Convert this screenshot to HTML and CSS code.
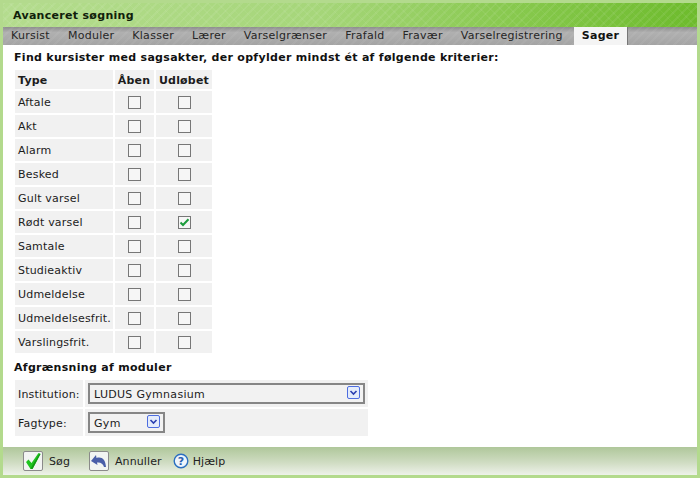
FILE: index.html
```html
<!DOCTYPE html>
<html lang="da">
<head>
    <meta charset="UTF-8">
    <title>Avanceret søgning</title>
    <link rel="stylesheet" href="styles.css">
</head>
<body>
    <div class="container">
        <div class="header">Avanceret søgning</div>
        <div class="tabs">
            <div class="tab">Kursist</div>
            <div class="tab">Moduler</div>
            <div class="tab">Klasser</div>
            <div class="tab">Lærer</div>
            <div class="tab">Varselgrænser</div>
            <div class="tab">Frafald</div>
            <div class="tab">Fravær</div>
            <div class="tab">Varselregistrering</div>
            <div class="tab active">Sager</div>
        </div>
        <div class="content">
            <div class="title">Find kursister med sagsakter, der opfylder mindst ét af følgende kriterier:</div>
            <table class="types">
                <tr class="head"><th class="name">Type</th><th>Åben</th><th>Udløbet</th></tr>
                <tr><td class="name">Aftale</td><td><span class="box"></span></td><td><span class="box"></span></td></tr>
                <tr><td class="name">Akt</td><td><span class="box"></span></td><td><span class="box"></span></td></tr>
                <tr><td class="name">Alarm</td><td><span class="box"></span></td><td><span class="box"></span></td></tr>
                <tr><td class="name">Besked</td><td><span class="box"></span></td><td><span class="box"></span></td></tr>
                <tr><td class="name">Gult varsel</td><td><span class="box"></span></td><td><span class="box"></span></td></tr>
                <tr><td class="name">Rødt varsel</td><td><span class="box"></span></td><td><span class="box">
                    <svg width="11" height="11" viewBox="0 0 11 11"><path d="M1.5 5.5 L4 8 L9.5 2.2" fill="none" stroke="#1c9c3c" stroke-width="2"/></svg>
                </span></td></tr>
                <tr><td class="name">Samtale</td><td><span class="box"></span></td><td><span class="box"></span></td></tr>
                <tr><td class="name">Studieaktiv</td><td><span class="box"></span></td><td><span class="box"></span></td></tr>
                <tr><td class="name">Udmeldelse</td><td><span class="box"></span></td><td><span class="box"></span></td></tr>
                <tr><td class="name">Udmeldelsesfrit.</td><td><span class="box"></span></td><td><span class="box"></span></td></tr>
                <tr><td class="name">Varslingsfrit.</td><td><span class="box"></span></td><td><span class="box"></span></td></tr>
            </table>
            <div class="subtitle">Afgrænsning af moduler</div>
            <table class="limits">
                <tr>
                    <td class="label">Institution:</td>
                    <td class="field"><div class="select wide"><span class="value">LUDUS Gymnasium</span>
                        <span class="arrow"><svg width="9" height="9" viewBox="0 0 9 9"><path d="M1.5 3 L4.5 6 L7.5 3" fill="none" stroke="#2a3fb0" stroke-width="1.6"/></svg></span>
                    </div></td>
                </tr>
                <tr>
                    <td class="label">Fagtype:</td>
                    <td class="field"><div class="select narrow"><span class="value">Gym</span>
                        <span class="arrow"><svg width="9" height="9" viewBox="0 0 9 9"><path d="M1.5 3 L4.5 6 L7.5 3" fill="none" stroke="#2a3fb0" stroke-width="1.6"/></svg></span>
                    </div></td>
                </tr>
            </table>
        </div>
        <div class="footer">
            <div class="action">
                <span class="icon-btn"><svg width="18" height="18" viewBox="0 0 18 18"><path d="M2 10 L4.5 7.5 L7.5 11 L14.5 1 L16.5 2 L8.5 17 L6.5 17 Z" fill="#1fc41f"/><path d="M6.5 17 L8.5 17 L16.5 2 L15.5 1.5 L8 14 Z" fill="#139a13"/></svg></span>
                Søg
            </div>
            <div class="action cancel">
                <span class="icon-btn"><svg width="18" height="18" viewBox="0 0 18 18"><path d="M1 9 L6 3 L6.5 6 C11.5 4.5 15.5 7 16 15 L14 15 C13 11.5 10.5 10 7 10.5 L7.5 13 Z" fill="#4a5ea8"/></svg></span>
                Annuller
            </div>
            <div class="action help">
                <svg width="16" height="16" viewBox="0 0 16 16"><circle cx="8" cy="8" r="6.8" fill="#eef4fb" stroke="#2b6fc0" stroke-width="1.4"/><text x="8" y="12" font-size="11" font-weight="bold" font-family="DejaVu Sans" text-anchor="middle" fill="#2b5fb0">?</text></svg>
                Hjælp
            </div>
        </div>
    </div>
</body>
</html>
```

FILE: styles.css
```css
html, body {
    margin: 0;
    height: 100%;
}
body {
    font-family: "DejaVu Sans", Verdana, sans-serif;
    font-size: 11px;
    letter-spacing: 0.2px;
    color: #1c1c1c;
    background-color: #b3da8d;
    overflow: hidden;
}
.container {
    height: 478px;
    box-sizing: border-box;
    padding: 3px;
    display: flex;
    flex-direction: column;
}

.header {
    height: 24px;
    box-sizing: border-box;
    padding: 6px 0 0 10px;
    font-weight: bold;
    letter-spacing: 0.3px;
    color: #10200a;
    background-color: #8fca58;
    background-image:
        repeating-linear-gradient(135deg, rgba(255, 255, 255, 0.07) 0 2px, rgba(255, 255, 255, 0) 2px 6px),
        repeating-linear-gradient(45deg, rgba(255, 255, 255, 0.05) 0 1px, rgba(255, 255, 255, 0) 1px 7px),
        linear-gradient(to right, #b4dc8e 0%, #a6d67a 45%, #86c84c 75%, #6dbb2c 100%);
}

.tabs {
    height: 18px;
    display: flex;
    gap: 2px;
    letter-spacing: 0.27px;
    background-color: #a8a8a8;
    background-image:
        repeating-linear-gradient(135deg, rgba(255, 255, 255, 0.05) 0 2px, rgba(255, 255, 255, 0) 2px 6px),
        linear-gradient(to bottom, #8e8e8e 0, #b0b0b0 30%, #a4a4a4 100%);
}
.tab {
    padding: 0 8px;
    line-height: 18px;
    color: #262626;
}
.tab.active {
    font-weight: bold;
    color: #111;
    background-color: #f4f4f4;
    margin-left: 1px;
    border-right: 1px solid #777;
}

.content {
    flex: 1;
    background-color: #fff;
    padding: 5px 0 0 10px;
}
.title, .subtitle {
    font-weight: bold;
    letter-spacing: 0.3px;
    color: #111;
    height: 15px;
    line-height: 15px;
    margin-left: 1px;
}
.subtitle {
    margin-top: 5px;
}

table {
    border-collapse: separate;
    border-spacing: 2px;
}
.types {
    margin-top: 3px;
}
.types th, .types td {
    background-color: #f1f1f1;
    padding: 0 1px 0 0;
    height: 22px;
    text-align: center;
}
.types .head th {
    height: 18px;
    padding-top: 1px;
    letter-spacing: 0.2px;
}
.types .name {
    width: 95px;
    padding: 0 0 0 3px;
    text-align: left;
}
.types th:nth-child(2), .types td:nth-child(2) {
    width: 38px;
}
.types th:nth-child(3), .types td:nth-child(3) {
    width: 56px;
    padding-right: 0;
}
.box {
    display: inline-block;
    width: 11px;
    height: 11px;
    border: 1px solid #777;
    background-color: #f6f6f6;
    vertical-align: middle;
}
.box svg {
    display: block;
}

.limits {
    margin-top: 3px;
}
.limits td {
    background-color: #f1f1f1;
    padding: 0;
    height: 27px;
}
.limits .label {
    width: 65px;
    padding: 1px 0 0 3px;
    height: 26px;
}
.limits .field {
    width: 280px;
    padding-left: 3px;
}
.select {
    height: 17px;
    line-height: 17px;
    border: 2px solid #868686;
    background-color: #f2f2f2;
    padding-left: 4px;
    display: flex;
    justify-content: space-between;
    align-items: center;
    letter-spacing: 0.3px;
}
.select.wide {
    width: 269px;
}
.select.narrow {
    width: 69px;
}
.value {
    margin-top: 2px;
}
.arrow {
    width: 11px;
    height: 11px;
    margin: 0 3px 2px 0;
    border: 1px solid #4d6de0;
    border-radius: 2px;
    background-color: #e4ecfb;
    display: flex;
    align-items: center;
    justify-content: center;
}

.footer {
    height: 28px;
    display: flex;
    align-items: center;
    padding-left: 20px;
    letter-spacing: 0.1px;
    background-image: linear-gradient(to bottom, #afc79a 0%, #cfdcc2 55%, #eef2ea 100%);
    color: #222;
}
.action {
    display: flex;
    align-items: center;
    gap: 6px;
}
.cancel {
    margin-left: 19px;
    gap: 6px;
}
.help {
    margin-left: 11px;
    gap: 4px;
}
.icon-btn {
    width: 18px;
    height: 18px;
    border: 1px solid #8a8a8a;
    border-radius: 2px;
    background-color: #f2f4f2;
    display: block;
}
.icon-btn svg {
    display: block;
}
```
